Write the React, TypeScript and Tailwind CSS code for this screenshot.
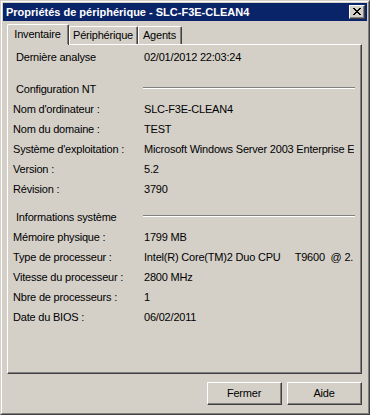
import React from "react";

const font = { fontFamily: '"Liberation Sans", Arial, sans-serif' };

function Row({ label, value }: { label: string; value: string }) {
  return (
    <div className="flex h-[20px] items-center">
      <div className="w-[131px] shrink-0 whitespace-nowrap">{label}</div>
      <div className="w-[210px] overflow-hidden whitespace-pre">{value}</div>
    </div>
  );
}

function Header({ label }: { label: string }) {
  return (
    <div className="flex h-[20px] items-center">
      <div className="w-[130px] shrink-0 whitespace-nowrap pl-[3px]">{label}</div>
      <div className="mb-[2px] flex-1 border-t border-b border-t-[#808080] border-b-white" />
    </div>
  );
}

function Button({ children }: { children: React.ReactNode }) {
  return (
    <div className="h-[23px] w-[75px] border-t border-l border-r border-b border-t-white border-l-white border-r-[#404040] border-b-[#404040]">
      <div className="flex h-full w-full items-center justify-center border-r border-b border-r-[#808080] border-b-[#808080]">
        {children}
      </div>
    </div>
  );
}

export default function App() {
  return (
    <div
      className="h-[415px] w-[370px] border-t border-l border-r border-b border-t-[#d4d0c8] border-l-[#d4d0c8] border-r-[#404040] border-b-[#404040] bg-[#d4d0c8] text-[11px] tracking-[-0.2px] text-black"
      style={font}
    >
      <div className="flex h-full w-full flex-col border-t border-l border-r border-b border-t-white border-l-white border-r-[#808080] border-b-[#808080] p-px">
        {/* Title bar */}
        <div className="flex h-[18px] shrink-0 items-center bg-[#0a246a] pl-[3px] pr-[2px]">
          <div className="flex-1 whitespace-nowrap text-[11px] font-bold tracking-normal text-white">
            Propriétés de périphérique - SLC-F3E-CLEAN4
          </div>
          <div className="h-[14px] w-[16px] border-t border-l border-r border-b border-t-white border-l-white border-r-[#404040] border-b-[#404040] bg-[#d4d0c8]">
            <div className="flex h-full w-full items-center justify-center border-r border-b border-r-[#808080] border-b-[#808080]">
              <svg width="8" height="7" viewBox="0 0 8 7">
                <path
                  d="M0 0h2v1h1v1h2V1h1V0h2v1H7v1H6v1H5v1h1v1h1v1h1v1H6V6H5V5H3v1H2v1H0V6h1V5h1V4h1V3H2V2H1V1H0z"
                  fill="#000"
                />
              </svg>
            </div>
          </div>
        </div>

        {/* Body */}
        <div className="flex flex-1 flex-col pl-[4px] pr-[5px] pt-[3px]">
          {/* Tabs */}
          <div className="relative z-10 flex h-[20px] items-end">
            <div className="mb-[-1px] flex h-[21px] w-[62px] items-center justify-center rounded-tl-[2px] rounded-tr-[2px] border-t border-l border-r border-t-white border-l-white border-r-[#404040] bg-[#d4d0c8] pb-px">
              <div className="flex h-full w-full items-center justify-center border-r border-r-[#808080]">
                Inventaire
              </div>
            </div>
            <div className="flex h-[18px] w-[69px] items-center justify-center rounded-tl-[2px] rounded-tr-[2px] border-t border-l border-r border-t-white border-l-white border-r-[#404040]">
              <div className="flex h-full w-full items-center justify-center border-r border-r-[#808080]">
                Périphérique
              </div>
            </div>
            <div className="flex h-[18px] w-[44px] items-center justify-center rounded-tl-[2px] rounded-tr-[2px] border-t border-l border-r border-t-white border-l-white border-r-[#404040]">
              <div className="flex h-full w-full items-center justify-center border-r border-r-[#808080]">
                Agents
              </div>
            </div>
          </div>

          {/* Panel */}
          <div className="h-[330px] border-t border-l border-r border-b border-t-white border-l-white border-r-[#404040] border-b-[#404040]">
            <div className="flex h-full w-full flex-col border-r border-b border-r-[#808080] border-b-[#808080] pl-[5px] pr-[5px] pt-[2px]">
              <div className="flex h-[20px] items-center">
                <div className="w-[131px] shrink-0 whitespace-nowrap pl-[3px]">Dernière analyse</div>
                <div className="whitespace-nowrap">02/01/2012 22:03:24</div>
              </div>
              <div className="h-[12px]" />
              <Header label="Configuration NT" />
              <Row label="Nom d'ordinateur :" value="SLC-F3E-CLEAN4" />
              <Row label="Nom du domaine :" value="TEST" />
              <Row label="Système d'exploitation :" value="Microsoft Windows Server 2003 Enterprise E" />
              <Row label="Version :" value="5.2" />
              <Row label="Révision :" value="3790" />
              <div className="h-[8px]" />
              <Header label="Informations système" />
              <Row label="Mémoire physique :" value="1799 MB" />
              <Row label="Type de processeur :" value="Intel(R) Core(TM)2 Duo CPU     T9600  @ 2." />
              <Row label="Vitesse du processeur :" value="2800 MHz" />
              <Row label="Nbre de processeurs :" value="1" />
              <Row label="Date du BIOS :" value="06/02/2011" />
            </div>
          </div>

          {/* Buttons */}
          <div className="mt-[8px] flex justify-end gap-[5px]">
            <Button>Fermer</Button>
            <Button>Aide</Button>
          </div>
        </div>
      </div>
    </div>
  );
}
